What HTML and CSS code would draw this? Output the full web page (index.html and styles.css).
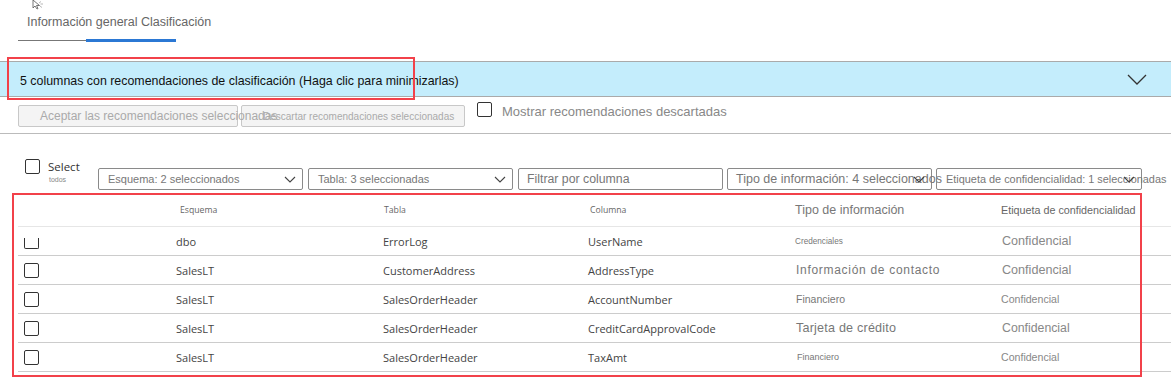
FILE: index.html
```html
<!DOCTYPE html>
<html lang="es">
<head>
  <meta charset="UTF-8">
  <title>Clasificación</title>
  <link rel="stylesheet" href="styles.css">
</head>
<body>
  <!-- Tabs -->
  <div class="tabs">
    <svg class="cursor" width="12" height="10" viewBox="0 0 12 10">
      <path d="M1 0 V8 L3 6 L5 9 L6 8.5 L4.5 5.5 H7.5 Z" fill="#fff" stroke="#555" stroke-width="0.8"/>
      <path d="M7 3 l2 -1.5 M8.5 4 l2.5 0 M8 6 l2 1.5" stroke="#999" stroke-width="0.7"/>
    </svg>
    <div class="tab-label">Información general Clasificación</div>
    <div class="tab-line"><span class="line-gray"></span><span class="line-blue"></span></div>
  </div>

  <!-- Banner -->
  <div class="banner">
    <span class="banner-text">5 columnas con recomendaciones de clasificación (Haga clic para minimizarlas)</span>
    <svg class="chevron-big" width="20" height="11" viewBox="0 0 20 11">
      <path d="M1 1 L10 10 L19 1" fill="none" stroke="#333" stroke-width="1.3"/>
    </svg>
    <div class="mark mark-banner"></div>
  </div>

  <!-- Actions -->
  <div class="actions">
    <div class="btn btn-accept">Aceptar las recomendaciones seleccionadas</div>
    <div class="btn btn-discard">Descartar recomendaciones seleccionadas</div>
    <span class="box box-show"></span>
    <span class="show-label">Mostrar recomendaciones descartadas</span>
  </div>

  <!-- Filters -->
  <div class="filters">
    <div class="select-all">
      <span class="box"></span>
      <div class="select-text">
        <div class="select-word">Select</div>
        <div class="select-small">todos</div>
      </div>
    </div>
    <div class="dropdown dd-schema"><span>Esquema: 2 seleccionados</span><svg class="chev" width="12" height="7" viewBox="0 0 12 7"><path d="M1 1 L6 6 L11 1" fill="none" stroke="#444" stroke-width="1.1"/></svg></div>
    <div class="dropdown dd-table"><span>Tabla: 3 seleccionadas</span><svg class="chev" width="12" height="7" viewBox="0 0 12 7"><path d="M1 1 L6 6 L11 1" fill="none" stroke="#444" stroke-width="1.1"/></svg></div>
    <div class="dropdown input"><span>Filtrar por columna</span></div>
    <div class="dropdown dd-type"><span>Tipo de información: 4 seleccionados</span><svg class="chev" width="12" height="7" viewBox="0 0 12 7"><path d="M1 1 L6 6 L11 1" fill="none" stroke="#444" stroke-width="1.1"/></svg></div>
    <div class="dropdown dd-label"><span>Etiqueta de confidencialidad: 1 seleccionadas</span><svg class="chev" width="12" height="7" viewBox="0 0 12 7"><path d="M1 1 L6 6 L11 1" fill="none" stroke="#444" stroke-width="1.1"/></svg></div>
  </div>

  <!-- Table -->
  <div class="table">
    <div class="mark mark-table"></div>
    <div class="row head">
      <div></div>
      <div class="h-schema">Esquema</div>
      <div class="h-table">Tabla</div>
      <div class="h-col">Columna</div>
      <div class="h-type">Tipo de información</div>
      <div class="h-label">Etiqueta de confidencialidad</div>
    </div>
    <div class="row">
      <div class="check"><span class="box box-cut"></span></div>
      <div>dbo</div>
      <div>ErrorLog</div>
      <div>UserName</div>
      <div class="type t8">Credenciales</div>
      <div class="conf c12">Confidencial</div>
    </div>
    <div class="row">
      <div class="check"><span class="box"></span></div>
      <div>SalesLT</div>
      <div>CustomerAddress</div>
      <div>AddressType</div>
      <div class="type t11">Información de contacto</div>
      <div class="conf c12">Confidencial</div>
    </div>
    <div class="row">
      <div class="check"><span class="box"></span></div>
      <div>SalesLT</div>
      <div>SalesOrderHeader</div>
      <div>AccountNumber</div>
      <div class="type t10">Financiero</div>
      <div class="conf c10">Confidencial</div>
    </div>
    <div class="row">
      <div class="check"><span class="box"></span></div>
      <div>SalesLT</div>
      <div>SalesOrderHeader</div>
      <div>CreditCardApprovalCode</div>
      <div class="type t13">Tarjeta de crédito</div>
      <div class="conf c12b">Confidencial</div>
    </div>
    <div class="row">
      <div class="check"><span class="box"></span></div>
      <div>SalesLT</div>
      <div>SalesOrderHeader</div>
      <div>TaxAmt</div>
      <div class="type t9">Financiero</div>
      <div class="conf c10">Confidencial</div>
    </div>
  </div>
</body>
</html>
```

FILE: styles.css
```css
body {
  margin: 0;
  background: #fff;
  font-family: 'Liberation Sans', Arial, sans-serif;
  width: 1171px;
  height: 385px;
  overflow: hidden;
  position: relative;
}

/* tabs */
.tabs {
  position: relative;
  padding: 15px 0 0 18px;
  height: 27px;
}

.cursor {
  position: absolute;
  left: 32px;
  top: 0;
}

.tab-label {
  padding-left: 9px;
  font-size: 12.5px;
  color: #666;
  height: 23px;
}

.tab-line {
  display: flex;
  align-items: flex-end;
  height: 4px;
}

.line-gray {
  width: 68px;
  height: 1px;
  margin-bottom: 1px;
  background: #777;
}

.line-blue {
  width: 90px;
  height: 3px;
  background: #2b78d4;
}

/* banner */
.banner {
  position: relative;
  margin-top: 19px;
  height: 34px;
  background: #c4edfc;
  border-top: 1px solid #aaa;
  border-bottom: 1px solid #aaa;
  display: flex;
  align-items: center;
  padding-left: 20px;
  font-size: 12.4px;
  color: #111;
}

.banner-text {
  margin-top: 4px;
}

.chevron-big {
  margin-left: auto;
  margin-right: 24px;
}

.mark {
  position: absolute;
  border: 2px solid #f2414a;
  pointer-events: none;
  z-index: 2;
}

.mark-banner {
  left: 7px;
  top: -5px;
  width: 404px;
  height: 39px;
}

/* actions */
.actions {
  display: flex;
  align-items: flex-start;
  padding: 8px 0 0 18px;
  border-bottom: 1px solid #bbb;
  box-sizing: border-box;
  height: 37px;
}

.btn {
  height: 22px;
  box-sizing: border-box;
  background: #f4f4f4;
  border: 1px solid #c8c8c8;
  border-radius: 2px;
  color: #aaa;
  white-space: nowrap;
  display: flex;
  align-items: center;
  flex-shrink: 0;
}

.btn-accept {
  width: 220px;
  padding-left: 21px;
  font-size: 12px;
  position: relative;
  z-index: 1;
}

.btn-discard {
  width: 224px;
  margin-left: 3px;
  padding-left: 21px;
  font-size: 10px;
}

.box {
  display: inline-block;
  flex-shrink: 0;
  width: 13px;
  height: 13px;
  border: 1.5px solid #333;
  border-radius: 2px;
  background: #fff;
}

.box-show {
  margin-left: 12px;
  margin-top: -3px;
}

.show-label {
  margin-left: 10px;
  margin-top: -1px;
  font-size: 13px;
  color: #888;
}

/* filters */
.filters {
  display: flex;
  align-items: flex-start;
  margin-top: 25px;
  height: 35px;
}

.select-all {
  display: flex;
  padding-left: 25px;
  width: 98px;
  flex-shrink: 0;
  box-sizing: border-box;
}

.select-text {
  margin-left: 8px;
  margin-top: 1px;
}

.select-word {
  font-family: 'Open Sans', sans-serif;
  font-size: 11.5px;
  color: #333;
  line-height: 13px;
}

.select-small {
  font-size: 7px;
  color: #888;
  margin-top: 3px;
  padding-left: 1px;
}

.dropdown {
  position: relative;
  flex-shrink: 0;
  margin-top: 9px;
  width: 205px;
  height: 22px;
  box-sizing: border-box;
  border: 1px solid #8a8a8a;
  border-radius: 2px;
  display: flex;
  align-items: center;
  padding-left: 9px;
  font-size: 12.5px;
  color: #777;
  white-space: nowrap;
  margin-right: 5px;
}

.dropdown .chev {
  position: absolute;
  right: 6px;
  top: 7px;
}

.dd-schema,
.dd-table {
  font-size: 11px;
}

.dropdown.input {
  padding-left: 8px;
  margin-right: 4px;
  font-size: 12.3px;
}

.dd-type {
  padding-left: 8px;
  font-size: 12.5px;
  margin-right: 4px;
}

.dd-label {
  width: 206px;
  font-size: 10.9px;
  padding-left: 9px;
  margin-right: 0;
}

/* table */
.table {
  position: relative;
  margin-left: 18px;
}

.mark-table {
  left: -6px;
  top: -1px;
  width: 1126px;
  height: 180px;
}

.row {
  display: grid;
  grid-template-columns: 158px 207px 205px 207px 206px 1fr;
  align-items: center;
  height: 29px;
  border-bottom: 1px solid #ccc;
  box-sizing: border-box;
  font-family: 'Open Sans', sans-serif;
  font-size: 11px;
  color: #444;
}

.check {
  padding-left: 6px;
  display: flex;
  align-items: center;
}

.row.head {
  height: 33px;
  border-bottom: 1px solid #e6e6e6;
  color: #666;
  font-size: 8.7px;
}

.h-schema { padding-left: 4px; }
.h-table { padding-left: 1px; }
.h-col { padding-left: 2px; }

.h-type {
  font-family: 'Liberation Sans', Arial, sans-serif;
  font-size: 12.5px;
  color: #777;
}

.h-label {
  font-family: 'Liberation Sans', Arial, sans-serif;
  font-size: 10.75px;
  color: #666;
}

.box-cut {
  height: 10px;
  border-top: none;
  border-radius: 0 0 2px 2px;
  margin-top: 5px;
}

.type {
  font-family: 'Liberation Sans', Arial, sans-serif;
  color: #777;
}

.t8 { font-size: 8.2px; }
.t9 { font-size: 9px; padding-left: 2px; }
.t10 { font-size: 10.5px; padding-left: 1px; }
.t11 { font-size: 12px; letter-spacing: 0.7px; padding-left: 1px; }
.t13 { font-size: 12.6px; letter-spacing: 0.2px; padding-left: 1px; }

.conf {
  font-family: 'Liberation Sans', Arial, sans-serif;
  color: #888;
}

.c12 { font-size: 12.6px; padding-left: 1px; }
.c12b { font-size: 12.3px; padding-left: 1px; }
.c10 { font-size: 10.6px; }
```
